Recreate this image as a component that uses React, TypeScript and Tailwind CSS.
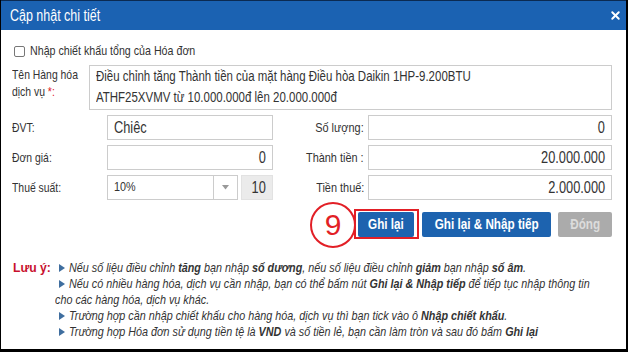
import React from "react";
import { X } from "lucide-react";

const F = "font-['Liberation_Sans',Arial,sans-serif]";
const L = "inline-block whitespace-nowrap origin-left scale-x-[0.8]";
const R = "inline-block whitespace-nowrap origin-right scale-x-[0.8]";
const RL = "inline-block whitespace-nowrap origin-right scale-x-[0.84]";
const C = "inline-block whitespace-nowrap origin-center scale-x-[0.78]";
const N = "inline-block whitespace-nowrap origin-left scale-x-[0.83]";

function Bullet() {
  return (
    <svg width="6" height="8" viewBox="0 0 6 8" className="shrink-0 mr-[4px]">
      <path d="M0 0 L6 4 L0 8 Z" fill="#3f6e9f" />
    </svg>
  );
}

function Field({ value, right = false }: { value: string; right?: boolean }) {
  return (
    <div
      className={`h-[25px] border border-[#cccccc] bg-white px-[6px] flex items-center text-[16px] text-[#333] ${
        right ? "justify-end" : "justify-start"
      }`}
    >
      <span className={right ? R : L}>{value}</span>
    </div>
  );
}

function LeftLabel({ text }: { text: string }) {
  return (
    <div className="w-[95px] text-[13px]">
      <span className={L}>{text}</span>
    </div>
  );
}

function RightLabel({ text }: { text: string }) {
  return (
    <div className="w-[95px] pr-[4px] text-[13px] flex justify-end">
      <span className={RL}>{text}</span>
    </div>
  );
}

function Btn({ text, w, bg, fg }: { text: string; w: string; bg: string; fg: string }) {
  return (
    <div className={`${w} ${bg} ${fg} h-[25px] rounded-[2px] flex items-center justify-center text-[15px] font-bold`}>
      <span className={C}>{text}</span>
    </div>
  );
}

export default function App() {
  return (
    <div className={`w-[628px] h-[352px] overflow-hidden bg-black pl-[1px] pr-[2px] pb-[3px] flex flex-col ${F}`}>
      <div className="flex-1 bg-white flex flex-col overflow-hidden">
        <div className="h-[30px] shrink-0 bg-[#1b62b2] border-t border-[#0b2a52] flex items-center justify-between pl-[9px] pr-[4px]">
          <span className="text-white text-[16px] leading-none inline-block whitespace-nowrap origin-left scale-x-[0.78]">
            Cập nhật chi tiết
          </span>
          <X size={13} strokeWidth={3.6} color="#ffffff" />
        </div>

        <div className="flex flex-col pl-[11px] pr-[14px] text-[#333]">
          <div className="mt-[11px] h-[20px] flex items-center">
            <div className="ml-[2px] w-[11px] h-[11px] border border-[#777] rounded-[2px] bg-white" />
            <span className="ml-[5px] text-[13.5px]">
              <span className="inline-block whitespace-nowrap origin-left scale-x-[0.79]">
                Nhập chiết khấu tổng của Hóa đơn
              </span>
            </span>
          </div>

          <div className="mt-[4px] flex">
            <div className="w-[77px] text-[13px] leading-[17px] pt-[1px] flex flex-col">
              <span className={L}>Tên Hàng hóa</span>
              <span className={L}>
                dịch vụ <span className="text-[#e0202a]">*:</span>
              </span>
            </div>
            <div className="flex-1 h-[45px] border border-[#cccccc] px-[6px] text-[15.5px] leading-[21px] text-[#333] flex flex-col">
              <div className="-mt-[1px] flex flex-col">
                <span className="inline-block whitespace-nowrap origin-left scale-x-[0.74]">
                  Điều chỉnh tăng Thành tiền của mặt hàng Điều hòa Daikin 1HP-9.200BTU
                </span>
                <span className="inline-block whitespace-nowrap origin-left scale-x-[0.74]">
                  ATHF25XVMV từ 10.000.000đ lên 20.000.000đ
                </span>
              </div>
            </div>
          </div>

          <div className="mt-[5px] flex flex-col gap-[5px]">
            <div className="flex items-center">
              <LeftLabel text="ĐVT:" />
              <div className="w-[166px]">
                <Field value="Chiêc" />
              </div>
              <RightLabel text="Số lượng:" />
              <div className="flex-1">
                <Field value="0" right />
              </div>
            </div>
            <div className="flex items-center">
              <LeftLabel text="Đơn giá:" />
              <div className="w-[166px]">
                <Field value="0" right />
              </div>
              <RightLabel text="Thành tiền :" />
              <div className="flex-1">
                <Field value="20.000.000" right />
              </div>
            </div>
            <div className="flex items-center">
              <LeftLabel text="Thuế suất:" />
              <div className="w-[166px] flex gap-[3px]">
                <div className="w-[131px] h-[25px] border border-[#cccccc] flex">
                  <div className="flex-1 flex items-center pl-[6px] text-[13.5px]">
                    <span className={L}>10%</span>
                  </div>
                  <div className="w-[24px] border-l border-[#cccccc] flex items-center justify-center">
                    <svg width="7" height="5" viewBox="0 0 7 5">
                      <path d="M0 0 L7 0 L3.5 4.5 Z" fill="#999999" />
                    </svg>
                  </div>
                </div>
                <div className="flex-1 h-[25px] bg-[#ebebeb] border border-[#e2e2e2] flex items-center justify-end pr-[6px] text-[16px]">
                  <span className={R}>10</span>
                </div>
              </div>
              <RightLabel text="Tiền thuế:" />
              <div className="flex-1">
                <Field value="2.000.000" right />
              </div>
            </div>
          </div>

          <div className="mt-[9px] flex justify-end items-center">
            <div className="relative">
              <div className="absolute left-[-44px] top-[-7px] w-[46px] h-[46px] rounded-full border-2 border-[#e21f26] flex items-center justify-center text-[30px] leading-none text-[#e21f26]">
                9
              </div>
              <div className="h-[30px] border-2 border-[#e21f26] flex items-center pl-[2px] pr-[3px]">
                <Btn text="Ghi lại" w="w-[56px]" bg="bg-[#1d63af]" fg="text-white" />
              </div>
            </div>
            <div className="ml-[3px]">
              <Btn text="Ghi lại & Nhập tiếp" w="w-[129px]" bg="bg-[#1d63af]" fg="text-white" />
            </div>
            <div className="ml-[7px]">
              <Btn text="Đóng" w="w-[54px]" bg="bg-[#ababab]" fg="text-[#dcdcdc]" />
            </div>
          </div>

          <div className="mt-[21px] flex">
            <div className="w-[47px] pl-[1px] text-[13.5px] leading-[16px] font-bold text-[#c8102e]">
              <span className="inline-block whitespace-nowrap origin-left scale-x-[0.9]">Lưu ý:</span>
            </div>
            <div className="flex-1 text-[13px] leading-[16px] italic text-[#333] flex flex-col">
              <div className="flex items-center pl-[4px]">
                <Bullet />
                <span className={N}>
                  Nếu số liệu điều chỉnh <b>tăng</b> bạn nhập <b>số dương</b>, nếu số liệu điều chỉnh <b>giảm</b> bạn
                  nhập <b>số âm</b>.
                </span>
              </div>
              <div className="flex items-center pl-[4px]">
                <Bullet />
                <span className={N}>
                  Nếu có nhiều hàng hóa, dịch vụ cần nhập, bạn có thể bấm nút <b>Ghi lại &amp; Nhập tiếp</b> để tiếp tục
                  nhập thông tin
                </span>
              </div>
              <div>
                <span className={N}>cho các hàng hóa, dịch vụ khác.</span>
              </div>
              <div className="flex items-center pl-[4px]">
                <Bullet />
                <span className={N}>
                  Trường hợp cần nhập chiết khấu cho hàng hóa, dịch vụ thì bạn tick vào ô <b>Nhập chiết khấu</b>.
                </span>
              </div>
              <div className="flex items-center pl-[4px]">
                <Bullet />
                <span className={N}>
                  Trường hợp Hóa đơn sử dụng tiền tệ là <b>VND</b> và số tiền lẻ, bạn cần làm tròn và sau đó bấm{" "}
                  <b>Ghi lại</b>
                </span>
              </div>
            </div>
          </div>
        </div>
      </div>
    </div>
  );
}
